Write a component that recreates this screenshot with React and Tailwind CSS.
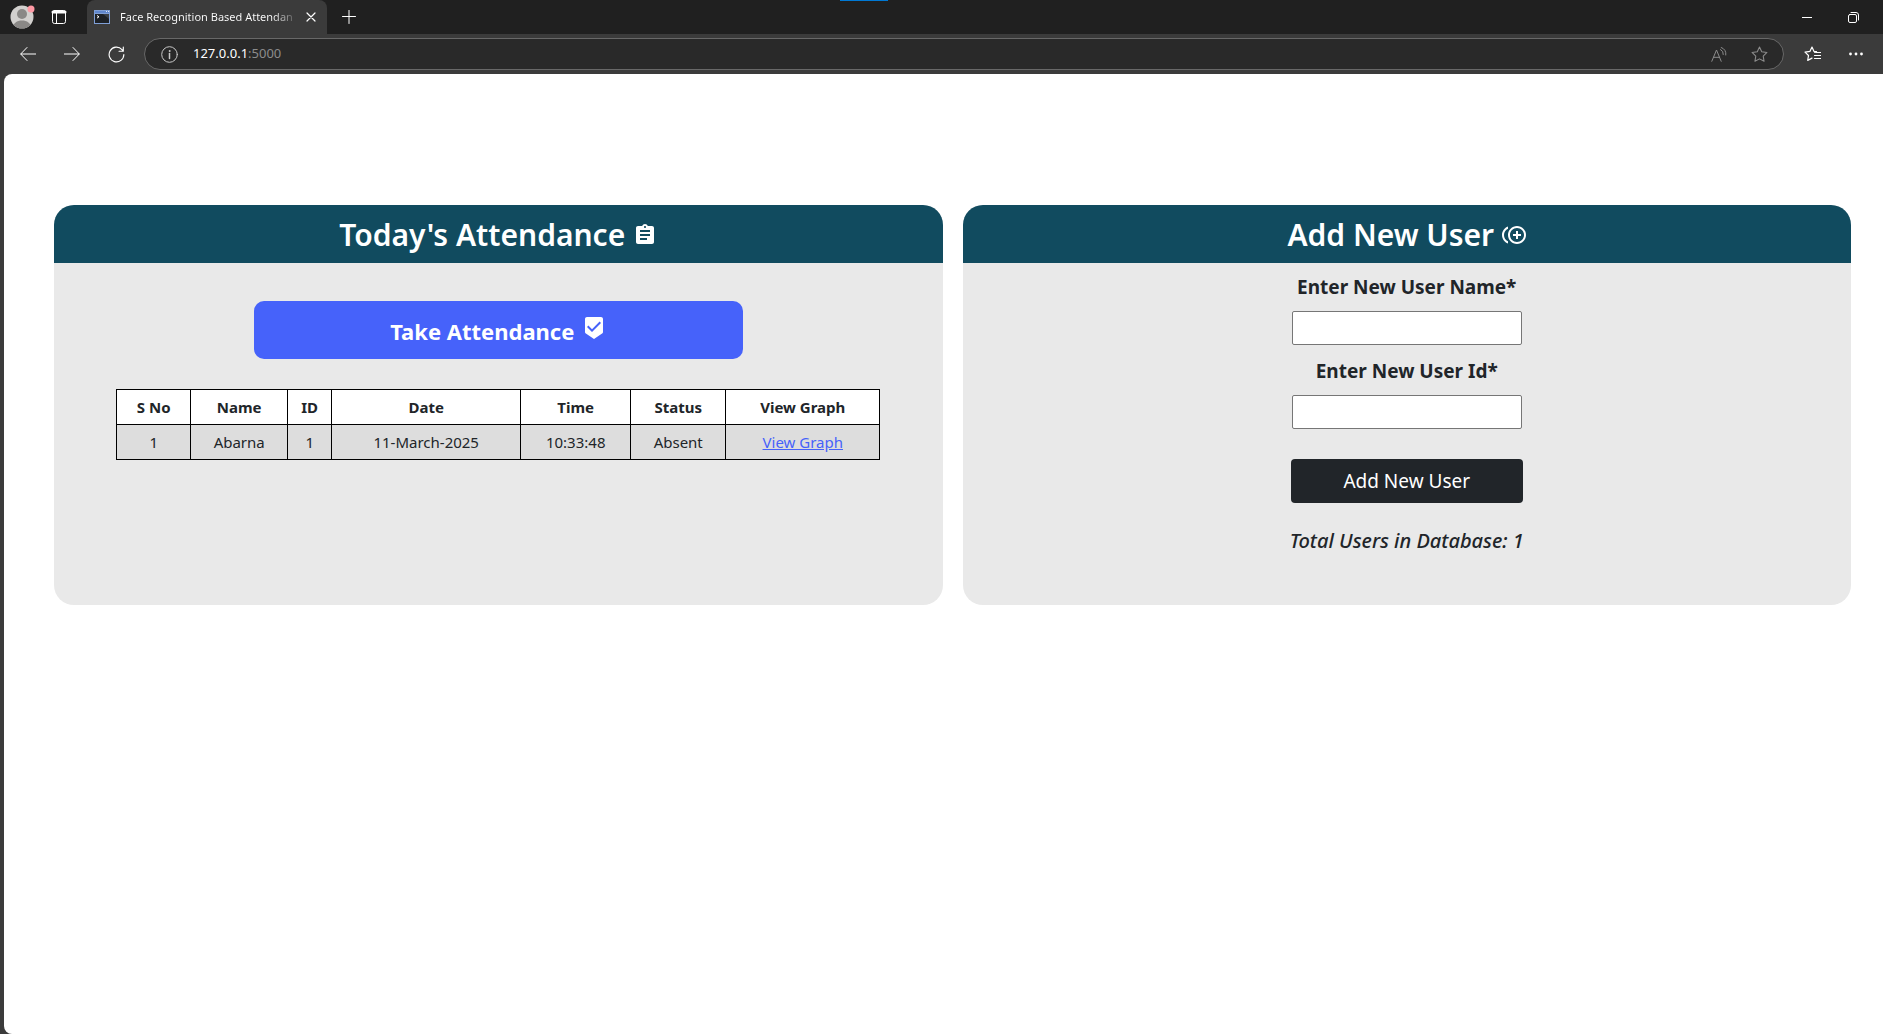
import React from "react";
import { MdAssignment, MdBeenhere, MdControlPointDuplicate } from "react-icons/md";

const stroke = {
  fill: "none",
  stroke: "currentColor",
  strokeLinecap: "round",
  strokeLinejoin: "round",
};

function IconButton({ label, className = "", children }) {
  return (
    <button type="button" aria-label={label} className={`flex items-center justify-center ${className}`}>
      {children}
    </button>
  );
}

function Avatar() {
  return (
    <svg width="26" height="26" viewBox="0 0 26 26">
      <defs>
        <clipPath id="avatar-disc">
          <circle cx="12" cy="13" r="11.5" />
        </clipPath>
      </defs>
      <circle cx="12" cy="13" r="11.5" fill="#d2d0ce" />
      <g clipPath="url(#avatar-disc)" fill="#8a8886">
        <circle cx="12" cy="10" r="5" />
        <path d="M3 24c0-5 4-7.500 9-7.500s9 2.500 9 7.500z" />
      </g>
      <circle cx="21" cy="5" r="3.500" fill="#ff99a4" />
    </svg>
  );
}

function TabActionsIcon() {
  return (
    <svg width="16" height="16" viewBox="0 0 16 16" {...stroke}>
      <rect x="1.500" y="1.500" width="13" height="13" rx="2" />
      <path d="M2 3h12" strokeWidth="3" />
      <path d="M5.500 4v10.500" />
    </svg>
  );
}

function ConsoleIcon() {
  return (
    <svg width="16" height="14" viewBox="0 0 16 14">
      <rect width="16" height="14" fill="#7f9fd6" />
      <rect x="1" y="1" width="14" height="2" fill="#5f86cc" />
      <rect x="12" y="1" width="1" height="1" fill="#dfe8f8" />
      <rect x="14" y="1" width="1" height="1" fill="#dfe8f8" />
      <rect x="1" y="4" width="14" height="9" fill="#1d2126" />
      <path d="M9 4h6v5z" fill="#3a3f45" />
      <path d="M3 5.500l2 1.300-2 1.300" fill="none" stroke="#fff" />
    </svg>
  );
}

function TabStrip() {
  return (
    <div className="flex h-[34px] items-stretch bg-[#202020]">
      <IconButton label="Profile" className="ml-[9px] w-7">
        <Avatar />
      </IconButton>
      <IconButton label="Tab actions" className="ml-3.5 w-4">
        <TabActionsIcon />
      </IconButton>
      <div className="ml-5 flex w-60 items-center rounded-t-lg bg-[#3b3b3b] pr-2 pl-[7px]">
        <ConsoleIcon />
        <span className="ml-2.5 flex-1 bg-linear-to-r from-white from-85% to-transparent bg-clip-text text-[11px] whitespace-nowrap text-transparent">
          Face Recognition Based Attendan
        </span>
        <IconButton label="Close tab" className="ml-1 h-4 w-4">
          <svg width="10" height="10" viewBox="0 0 10 10" {...stroke} strokeWidth="1.200">
            <path d="M1 1l8 8M9 1l-8 8" />
          </svg>
        </IconButton>
      </div>
      <IconButton label="New tab" className="ml-3.5 w-4">
        <svg width="14" height="14" viewBox="0 0 14 14" {...stroke}>
          <path d="M0.500 6.500h13M7 0v13.500" />
        </svg>
      </IconButton>
      <div className="flex-1 pl-[483px]">
        <div className="h-px w-12 bg-[#0078d4]" />
      </div>
      <IconButton label="Minimize" className="w-12">
        <svg width="10" height="10" viewBox="0 0 10 10" stroke="currentColor">
          <path d="M0 5.500h10" />
        </svg>
      </IconButton>
      <IconButton label="Restore" className="mr-2 w-11">
        <svg width="11" height="11" viewBox="0 0 11 11" {...stroke}>
          <rect x="0.500" y="2.500" width="8" height="8" rx="1.500" />
          <path d="M3 0.500h5a2.500 2.500 0 0 1 2.500 2.500v5" />
        </svg>
      </IconButton>
    </div>
  );
}

const starPath = "M8 1l2.100 4.400 4.900 0.700-3.500 3.400 0.800 4.900L8 12.100l-4.300 2.300 0.800-4.900L1 6.100l4.900-0.700z";

function Toolbar() {
  return (
    <div className="flex h-10 items-center bg-[#3b3b3b] pl-4">
      <IconButton label="Back" className="h-8 w-6">
        <svg width="16" height="14" viewBox="0 0 16 14" {...stroke}>
          <path d="M7 0.500L0.700 7 7 13.500M1 7h15" />
        </svg>
      </IconButton>
      <IconButton label="Forward" className="ml-5 h-8 w-6">
        <svg width="16" height="14" viewBox="0 0 16 14" {...stroke}>
          <path d="M9 0.500L15.300 7 9 13.500M15 7H0" />
        </svg>
      </IconButton>
      <IconButton label="Refresh" className="ml-5 h-8 w-6">
        <svg width="17" height="17" viewBox="0 0 18 18" {...stroke} strokeWidth="1.200">
          <path d="M16.800 9A7.800 7.800 0 1 1 14.800 3.800L16 5.200M16.200 1v4.500h-4.500" />
        </svg>
      </IconButton>
      <div className="ml-4 flex h-8 flex-1 items-center rounded-full border border-[#686868] bg-[#292929] pr-3 pl-4">
        <svg width="17" height="17" viewBox="0 0 17 17" className="text-[#c8c8c8]" {...stroke}>
          <circle cx="8.500" cy="8.500" r="7.800" />
          <path d="M8.500 7.500v5" strokeWidth="1.500" />
          <circle cx="8.500" cy="5" r="0.500" fill="currentColor" />
        </svg>
        <span className="ml-[15px] flex-1 text-[13px] text-[#8c8c8c]">
          <span className="text-white">127.0.0.1</span>:5000
        </span>
        <IconButton label="Read aloud" className="h-6 w-6 text-[#8c8c8c]">
          <svg width="16" height="15" viewBox="0 0 16 15" {...stroke}>
            <path d="M0.800 14.300L5.500 3l4.700 11.300M2.600 10.300h5.800M9.500 2.500a5 5 0 0 1 2.800 5M10.200 0.500a7 7 0 0 1 4.600 7.500" />
          </svg>
        </IconButton>
        <IconButton label="Add to favorites" className="ml-4 h-6 w-6 text-[#8c8c8c]">
          <svg width="17" height="17" viewBox="0 0 16 16" {...stroke}>
            <path d={starPath} />
          </svg>
        </IconButton>
      </div>
      <IconButton label="Favorites" className="ml-4 h-8 w-6 text-white">
        <svg width="17" height="16" viewBox="0 0 17 16" {...stroke} strokeWidth="1.200">
          <path d="M12.500 5.700L10 5.400 8 1 5.900 5.400 1 6.100l3.500 3.400-0.800 4.900L8 12.100M10.500 6.500h6M10.500 9.500h6M10.500 12.500h6" />
        </svg>
      </IconButton>
      <IconButton label="Settings and more" className="mr-[15px] ml-5 h-8 w-6 text-white">
        <svg width="14" height="4" viewBox="0 0 14 4" fill="currentColor">
          <circle cx="1.500" cy="2" r="1.400" />
          <circle cx="7" cy="2" r="1.400" />
          <circle cx="12.500" cy="2" r="1.400" />
        </svg>
      </IconButton>
    </div>
  );
}

function Card({ title, icon, children }) {
  return (
    <section className="min-h-[400px] overflow-hidden rounded-[20px] bg-[#e9e9e9]">
      <h2 className="flex h-[58px] items-center justify-center gap-2 bg-[#114b5f] pt-0.5 text-3xl font-semibold text-white">
        {title}
        {icon}
      </h2>
      {children}
    </section>
  );
}

const columns = [
  { name: "S No", width: "w-[74px]" },
  { name: "Name", width: "w-[97px]" },
  { name: "ID", width: "w-[44px]" },
  { name: "Date", width: "w-[189px]" },
  { name: "Time", width: "w-[110px]" },
  { name: "Status", width: "w-[95px]" },
  { name: "View Graph", width: "w-[154px]" },
];

const records = [["1", "Abarna", "1", "11-March-2025", "10:33:48", "Absent"]];

function AttendanceCard() {
  return (
    <Card title="Today's Attendance" icon={<MdAssignment className="size-6" />}>
      <div className="flex flex-col items-center">
        <button
          type="button"
          className="mt-[38px] flex h-[58px] w-[55%] items-center justify-center gap-2 rounded-[10px] bg-[#4662fa] pt-0.5 text-[22px] font-bold text-white"
        >
          Take Attendance
          <MdBeenhere className="mb-1.5 size-6" />
        </button>
        <table className="mt-[30px] w-[86%] table-fixed border-collapse text-center text-[15px] text-[#212529]">
          <thead>
            <tr className="h-[35px] bg-white">
              {columns.map((column) => (
                <th key={column.name} scope="col" className={`border border-black font-bold ${column.width}`}>
                  {column.name}
                </th>
              ))}
            </tr>
          </thead>
          <tbody>
            {records.map((record) => (
              <tr key={record[0]} className="h-[35px] bg-[#dddddd]">
                {record.map((value, i) => (
                  <td key={columns[i].name} className="border border-black">
                    {value}
                  </td>
                ))}
                <td className="border border-black">
                  <a href="#graph" className="text-[#4662fa] underline">
                    View Graph
                  </a>
                </td>
              </tr>
            ))}
          </tbody>
        </table>
      </div>
    </Card>
  );
}

function Field({ id, label }) {
  return (
    <>
      <label htmlFor={id} className="flex h-12 items-center font-bold">
        {label}
      </label>
      <input id={id} type="text" className="mb-0.5 h-[34px] w-[230px] rounded-xs border border-[#767676] bg-white px-1" />
    </>
  );
}

function NewUserCard() {
  return (
    <Card title="Add New User" icon={<MdControlPointDuplicate className="size-6" />}>
      <form className="flex flex-col items-center text-[19px] text-[#212529]">
        <Field id="new-user-name" label="Enter New User Name*" />
        <Field id="new-user-id" label="Enter New User Id*" />
        <button type="button" className="mt-7 h-11 w-[232px] rounded bg-[#212529] text-white">
          Add New User
        </button>
        <p className="mt-6 text-xl font-medium whitespace-nowrap italic">Total Users in Database: 1</p>
      </form>
    </Card>
  );
}

export default function App() {
  return (
    <div className="flex min-h-screen flex-col bg-[#3b3b3b] font-['Noto_Sans','Open_Sans',sans-serif] text-white">
      <TabStrip />
      <Toolbar />
      <main className="ml-1 flex-1 rounded-l-lg bg-white pt-[131px] pr-8 pl-[50px]">
        <div className="grid grid-cols-2 gap-5">
          <AttendanceCard />
          <NewUserCard />
        </div>
      </main>
    </div>
  );
}
